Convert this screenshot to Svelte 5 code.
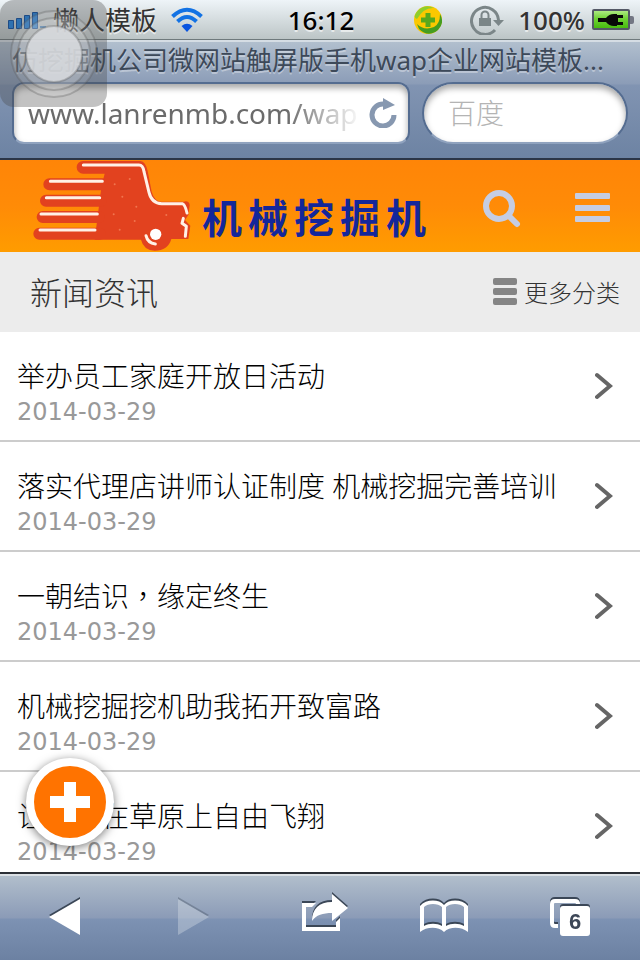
<script>
  let address = "www.lanrenmb.com/wap";
  let query = "";

  const logo = ["机", "械", "挖", "掘", "机"];

  const news = [
    { title: "举办员工家庭开放日活动", date: "2014-03-29", lang: "zh-CN" },
    { title: "落实代理店讲师认证制度 机械挖掘完善培训", date: "2014-03-29", lang: "zh-CN" },
    { title: "一朝结识，缘定终生", date: "2014-03-29", lang: "zh-TW" },
    { title: "机械挖掘挖机助我拓开致富路", date: "2014-03-29", lang: "zh-CN" },
    { title: "让梦想在草原上自由飞翔", date: "2014-03-29", lang: "zh-CN" },
  ];
</script>

<style>
  :global(body) {
    margin: 0;
    background: #fff;
  }

  .screen {
    position: relative;
    display: flex;
    flex-direction: column;
    height: 100vh;
    overflow: hidden;
    font-family: "Noto Sans", "Noto Sans CJK SC", sans-serif;
    font-weight: 300;
  }

  button {
    display: flex;
    align-items: center;
    padding: 0;
    border: none;
    background: none;
    font: inherit;
    color: inherit;
    cursor: pointer;
  }

  svg {
    display: block;
    flex: none;
  }

  .status {
    flex: none;
    display: grid;
    grid-template-columns: 1fr auto 1fr;
    align-items: center;
    height: 40px;
    box-sizing: border-box;
    padding: 0 6px 0 8px;
    border-bottom: 1px solid #6f7a7c;
    background: linear-gradient(#eef4f8, #bcc5c6);
    font-size: 26px;
    font-weight: 500;
    line-height: 38px;
    color: #333;
    text-shadow: 0 2px 0 rgba(255, 255, 255, 0.6);
  }

  .status-left,
  .status-right {
    display: flex;
    align-items: center;
  }

  .status-left {
    gap: 6px;
    font-weight: 400;
  }

  .wifi {
    margin-left: 8px;
  }

  .status-right {
    justify-content: flex-end;
    gap: 7px;
  }

  .shield {
    margin-right: 21px;
  }

  .lock {
    margin-right: 7px;
  }

  .clock {
    color: #000;
  }

  .browser {
    flex: none;
    height: 120px;
    box-sizing: border-box;
    padding: 2px 12px 0;
    border-top: 2px solid #d5dde4;
    border-bottom: 2px solid #2b3547;
    background: linear-gradient(#b1bfce, #8b9cb7 42px, #8194b2 43px, #6d83a3);
  }

  .page-title {
    font-size: 26px;
    font-weight: 400;
    line-height: 32px;
    color: #3d4959;
    text-shadow: 0 2px 0 rgba(255, 255, 255, 0.35);
    white-space: nowrap;
  }

  .bars {
    display: flex;
    gap: 12px;
    margin-top: 6px;
  }

  .address,
  .search {
    display: flex;
    align-items: center;
    box-sizing: border-box;
    height: 62px;
    border: 2px solid #546c90;
    border-bottom-color: #8fa2be;
    background: #fff;
    box-shadow: inset 0 4px 6px rgba(0, 0, 0, 0.35);
  }

  .address {
    flex: 1 1 0;
    min-width: 0;
    padding: 0 11px 0 14px;
    border-radius: 12px;
  }

  .search {
    flex: 0 0 206px;
    padding: 0 24px;
    border-radius: 31px;
  }

  .address input,
  .search input {
    flex: 1 1 0;
    min-width: 0;
    width: 100%;
    padding: 0;
    border: none;
    outline: none;
    background: none;
    font-family: inherit;
    font-size: 28px;
    font-weight: 400;
    color: #6b6b6b;
  }

  .address input {
    mask-image: linear-gradient(to right, #000 76%, transparent 98%);
  }

  .search input {
    font-weight: 300;
  }

  .search input::placeholder {
    color: #b4b4b4;
  }

  .site-header {
    flex: none;
    display: flex;
    align-items: center;
    height: 92px;
    padding: 0 30px 0 33px;
    background: linear-gradient(#ff8507, #ff8b07 50%, #ff9c00);
    color: #c5cde3;
  }

  .site-header button {
    margin-top: 6px;
  }

  .logo {
    display: flex;
    align-items: center;
    gap: 9px;
    margin-right: auto;
    text-decoration: none;
  }

  .logo-text {
    display: flex;
    gap: 6px;
    padding-top: 24px;
    font-size: 40px;
    font-weight: 700;
    line-height: 44px;
    color: #14279a;
  }

  .site-header .menu {
    margin-left: 54px;
    margin-top: 4px;
  }

  .section {
    flex: none;
    display: flex;
    align-items: center;
    justify-content: space-between;
    height: 80px;
    box-sizing: border-box;
    padding: 0 20px 2px 30px;
    background: #ececec;
    color: #333;
  }

  h1 {
    margin: 0;
    font-size: 32px;
    font-weight: 300;
  }

  .more {
    gap: 7px;
    font-size: 24px;
  }

  .news {
    flex: 1 1 0;
    min-height: 0;
    overflow: hidden;
    margin: 0;
    padding: 0;
    list-style: none;
    background: #fff;
  }

  .news a {
    display: flex;
    align-items: flex-start;
    justify-content: space-between;
    padding: 26px 27px 10px 17px;
    border-bottom: 2px solid #ccc;
    text-decoration: none;
    color: #000;
  }

  .news-title,
  .news-date {
    display: block;
    line-height: 36px;
  }

  .news-title {
    font-size: 28px;
  }

  .news-title:lang(zh-TW) {
    font-family: "Noto Sans", "Noto Sans CJK TC", sans-serif;
  }

  .news-date {
    font-family: Verdana, "DejaVu Sans", sans-serif;
    font-size: 24px;
    font-weight: 400;
    color: #999;
  }

  .add {
    position: absolute;
    left: 26px;
    bottom: 114px;
    justify-content: center;
    width: 88px;
    height: 88px;
    border: 8px solid #fff;
    border-radius: 50%;
    background: #ff7300;
    box-shadow: 0 2px 10px rgba(0, 0, 0, 0.5);
  }

  .toolbar {
    flex: none;
    display: flex;
    align-items: center;
    justify-content: space-between;
    height: 88px;
    box-sizing: border-box;
    padding: 0 38px 0 33px;
    border-top: 2px solid #2b2f36;
    background: linear-gradient(#dbe0e5 2px, #b1becc 2px, #8b9bb7 44px, #7d92b3 45px, #6c81a2);
  }

  .toolbar svg {
    filter: drop-shadow(0 -2px 0 #3b4757);
  }

  .toolbar button:disabled {
    opacity: 0.35;
  }

  .page-count {
    font-family: "Liberation Sans", Arial, sans-serif;
    font-size: 22px;
    font-weight: 700;
  }

  .assistive {
    position: absolute;
    top: 0;
    left: 0;
    justify-content: center;
    width: 107px;
    height: 107px;
    border-radius: 14px;
    background: rgba(70, 70, 70, 0.33);
  }
</style>

<div class="screen">
  <div class="status">
    <div class="status-left">
      <svg width="39" height="18" viewBox="0 0 39 18" aria-hidden="true">
        <g fill="#2387e6" stroke="#0d4fa5">
          <path d="M.5 9.500h5v8h-5zM8.500 7.500h5v10h-5zM16.500 4.500h5v13h-5zM24.500 1.500h5v16h-5z" />
        </g>
        <path d="M32 16h6" stroke="#3b7fc0" stroke-width="2" />
      </svg>
      <span>懒人模板</span>
      <svg class="wifi" width="32" height="26" viewBox="0 0 32 26" aria-label="Wi-Fi">
        <g fill="none" stroke="#1272e4" stroke-width="4">
          <path d="M1.500 9.500Q16-4 30.500 9.500" />
          <path d="M6.500 14.500Q16 5.500 25.500 14.500" />
        </g>
        <path d="M16 25l-5.500-6Q16 14.500 21.500 19z" fill="#0a55e0" />
      </svg>
    </div>
    <span class="clock">16:12</span>
    <div class="status-right">
      <svg class="shield" width="28" height="30" viewBox="0 0 28 30" aria-hidden="true">
        <circle cx="14" cy="15" r="14" fill="#fbc800" />
        <path d="M2 8Q9-2 20 3Q10 2 3 14Q-1 13 2 8z" fill="#8fce2c" />
        <path d="M3 19Q10 26 20 22Q26 19 26 9Q31 18 24 25Q14 33 5 24z" fill="#459d20" />
        <path d="M11.500 8h5v4.500H21v5h-4.500V22h-5v-4.500H7v-5h4.500z" fill="#58a81c" />
      </svg>
      <svg class="lock" width="34" height="31" viewBox="0 0 34 31" aria-hidden="true">
        <path d="M25 26A13.500 13.500 0 1 1 28.500 16" fill="none" stroke="#7b8688" stroke-width="3" />
        <path d="M23 16h11l-5.500 6z" fill="#7b8688" />
        <path d="M9 14h12v8H9z" fill="#7b8688" />
        <path d="M11.500 14v-3a3.500 3.500 0 0 1 7 0v3" fill="none" stroke="#7b8688" stroke-width="2" />
      </svg>
      <span>100%</span>
      <svg width="42" height="21" viewBox="0 0 42 21" aria-label="Charging">
        <defs>
          <linearGradient id="charge" x2="0" y2="1">
            <stop stop-color="#b4ec8b" />
            <stop offset=".45" stop-color="#70d236" />
            <stop offset="1" stop-color="#43b80b" />
          </linearGradient>
        </defs>
        <rect x="1" y="1" width="36" height="19" rx="1" fill="url(#charge)" stroke="#535866" stroke-width="2" />
        <path d="M38 7h2q2 0 2 2v4q0 2-2 2h-2z" fill="#737783" />
        <path d="M6 9h8q3-4 8-4h3v1h6v3h-5v4h5v3h-6v1h-3q-5 0-8-4H6z" fill="#080808" />
      </svg>
    </div>
  </div>

  <div class="browser">
    <div class="page-title">仿挖掘机公司微网站触屏版手机wap企业网站模板...</div>
    <div class="bars">
      <div class="address">
        <input type="text" bind:value={address} aria-label="网址" />
        <button aria-label="刷新">
          <svg width="28" height="30" viewBox="0 0 28 30">
            <path d="M15 6A11 11 0 1 0 25 17" fill="none" stroke="#8798b0" stroke-width="5" />
            <path d="M14 0l12 7-12 5z" fill="#8798b0" />
          </svg>
        </button>
      </div>
      <div class="search">
        <input type="text" bind:value={query} placeholder="百度" aria-label="百度" />
      </div>
    </div>
  </div>

  <header class="site-header">
    <a class="logo" href="#home">
      <svg width="160" height="92" viewBox="40 15 480 276" aria-hidden="true">
        <path
          d="M190 18H362Q378 20 384 48L396 110Q404 138 424 140H492Q508 136 510 150L506 180 496 195 512 212 506 252H455Q445 287 405 287 372 286 364 254H225L246 90 255 56H190a19 19 0 0 1 0-38z"
          fill="#e2421f" />
        <path
          d="M89 88H248M79 137H244M69 186H238M59 236H240"
          stroke="#e2421f"
          stroke-width="36"
          stroke-linecap="round" />
        <g fill="none" stroke="#fff1e6" stroke-width="9" stroke-linecap="round" stroke-linejoin="round">
          <path d="M92 79H248M80 128H240M64 177H233M61 225H226" />
          <path d="M191 30H358Q370 30 373 50L388 112Q396 145 426 146H488Q496 148 502 174" />
          <path d="M491 190L487 205 500 214 497 244M379 242Q384 264 407 267" />
        </g>
        <circle cx="408" cy="238" r="17" fill="#fff" />
        <g fill="#f0754f">
          <circle cx="285" cy="88" r="3" />
          <circle cx="330" cy="72" r="3" />
          <circle cx="308" cy="125" r="3" />
          <circle cx="350" cy="155" r="3" />
          <circle cx="282" cy="178" r="3" />
          <circle cx="345" cy="198" r="3" />
          <circle cx="300" cy="224" r="3" />
          <circle cx="440" cy="180" r="3" />
        </g>
      </svg>
      <span class="logo-text">
        {#each logo as char}
          <span>{char}</span>
        {/each}
      </span>
    </a>
    <button aria-label="搜索">
      <svg width="38" height="38" viewBox="0 0 38 38">
        <g fill="none" stroke="currentColor" stroke-width="6">
          <circle cx="16" cy="16" r="13" />
          <path d="M26 26l8 8" stroke-linecap="round" />
        </g>
      </svg>
    </button>
    <button class="menu" aria-label="菜单">
      <svg width="35" height="30" viewBox="0 0 35 30" fill="currentColor">
        <rect width="35" height="6" rx="1" />
        <rect y="12" width="35" height="6" rx="1" />
        <rect y="23" width="35" height="6" rx="1" />
      </svg>
    </button>
  </header>

  <div class="section">
    <h1>新闻资讯</h1>
    <button class="more">
      <svg width="24" height="28" viewBox="0 0 24 28" fill="#858585" aria-hidden="true">
        <rect y="1" width="24" height="7" rx="2" />
        <rect y="11" width="24" height="7" rx="2" />
        <rect y="21" width="24" height="7" rx="2" />
      </svg>
      更多分类
    </button>
  </div>

  <ul class="news">
    {#each news as item}
      <li>
        <a href="#news">
          <span>
            <span class="news-title" lang={item.lang}>{item.title}</span>
            <span class="news-date">{item.date}</span>
          </span>
          <svg width="18" height="54" viewBox="0 0 18 54" aria-hidden="true">
            <path d="M2 17l13 11L2 39" fill="none" stroke="#666" stroke-width="4" stroke-linecap="round" />
          </svg>
        </a>
      </li>
    {/each}
  </ul>

  <nav class="toolbar">
    <button aria-label="后退">
      <svg width="64" height="64" viewBox="0 0 64 64">
        <path d="M16 32L47 14V50z" fill="#fff" />
      </svg>
    </button>
    <button aria-label="前进" disabled>
      <svg width="64" height="64" viewBox="0 0 64 64">
        <path d="M19 14L50 32 19 50z" fill="#dfe6ec" />
      </svg>
    </button>
    <button aria-label="分享">
      <svg width="64" height="64" viewBox="0 0 64 64" fill="#fff">
        <path d="M16 18H30L26 22H20V42H50V37L54 33V46H16z" />
        <path d="M26 36C26 24 33 17 46 17V9L62 23 46 36V28C37 28 30 30 26 36z" />
      </svg>
    </button>
    <button aria-label="书签">
      <svg width="64" height="64" viewBox="0 0 64 64">
        <path
          fill="#fff"
          fill-rule="evenodd"
          d="M8 21C14 14 27 14 32 20 37 14 50 14 56 21V47C50 42 38 41 32 47 26 41 14 42 8 47zM12 22V41C17 38 25 38 30 41V22C26 18 16 18 12 22zM34 22V41C39 38 47 38 52 41V22C48 18 38 18 34 22z" />
      </svg>
    </button>
    <button aria-label="页面">
      <svg width="64" height="64" viewBox="0 0 64 64">
        <path d="M20 41H17Q14 41 14 38V19Q14 16 17 16H37Q40 16 40 19" fill="none" stroke="#fff" stroke-width="4" />
        <rect x="22" y="21" width="30" height="30" rx="3" fill="#fff" />
        <text class="page-count" x="37" y="44" text-anchor="middle" fill="#3d4757">6</text>
      </svg>
    </button>
  </nav>

  <button class="add" aria-label="添加">
    <svg width="40" height="40" viewBox="0 0 40 40">
      <path d="M14 0h12v14h14v12H26v14H14V26H0V14h14z" fill="#fff" />
    </svg>
  </button>

  <button class="assistive" aria-label="AssistiveTouch">
    <svg width="88" height="88" viewBox="0 0 88 88">
      <g stroke="rgba(90,90,90,.3)" stroke-width="2">
        <circle cx="44" cy="44" r="43" fill="rgba(255,255,255,.12)" />
        <circle cx="44" cy="44" r="36" fill="rgba(255,255,255,.2)" />
        <circle cx="44" cy="44" r="28" fill="rgba(216,218,222,.85)" />
      </g>
    </svg>
  </button>
</div>
